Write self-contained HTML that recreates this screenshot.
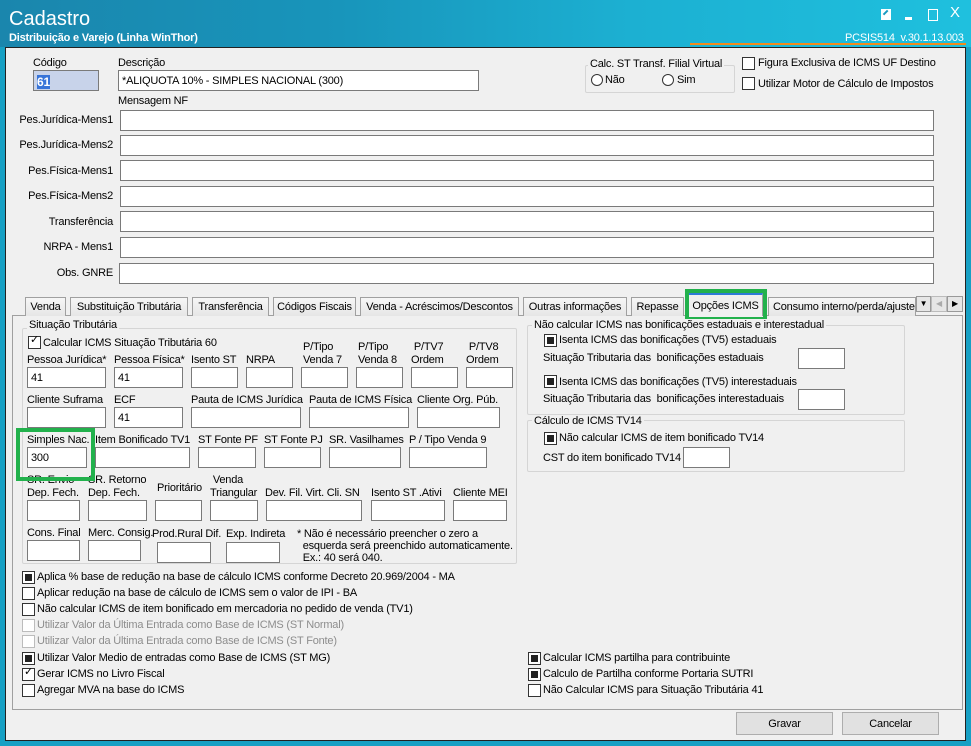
<!DOCTYPE html>
<html><head><meta charset="utf-8"><style>
*{margin:0;padding:0;box-sizing:border-box}
body{width:971px;height:746px;overflow:hidden;position:relative;font-family:"Liberation Sans",sans-serif;font-size:11px;letter-spacing:-0.2px;color:#000;background:#17a0c4}
.a{position:absolute;white-space:nowrap}
.hdr{left:0;top:0;width:971px;height:47px;background:linear-gradient(90deg,#1a86ad 0%,#1895bb 35%,#1cb0d2 65%,#1fc0de 100%)}
.in{position:absolute;background:#fff;border:1px solid #7a7a7a;height:21px;padding:4px 0 0 3px}
.cb{position:absolute;width:13px;height:13px;background:#fff;border:1px solid #333}
.cb.f::after{content:"";position:absolute;left:2px;top:2px;width:7px;height:7px;background:#222}
.cb.d{border-color:#bcbcbc}
.fs{position:absolute;border:1px solid #d5d5d5;border-radius:2px}
.tab{position:absolute;top:297px;height:19px;border:1px solid #a0a0a0;border-bottom:none;background:linear-gradient(#f6f6f6,#e6e6e6);padding:3px 0 0 0;text-align:center;white-space:nowrap;overflow:hidden}
.btn{position:absolute;border:1px solid #adadad;background:#e1e1e1;text-align:center;padding-top:5px;height:23px}
.r{text-align:right}
</style></head><body>
<div class="a hdr"></div>
<div class="a" style="left:9px;top:8px;font-size:20px;color:#fff;letter-spacing:0">Cadastro</div>
<div class="a" style="left:9px;top:32px;font-size:11px;color:#fff;font-weight:bold">Distribuição e Varejo (Linha WinThor)</div>
<div class="a" style="left:845px;top:32px;color:#fff">PCSIS514 &nbsp;v.30.1.13.003</div>
<div class="a" style="left:690px;top:43px;width:276px;height:2px;background:#f28a1c"></div>
<div class="a" style="left:881px;top:9px;width:10px;height:11px;background:#fff"></div>
<div class="a" style="left:884px;top:11px;width:6px;height:6px;border-top:2px solid #1a9ac0;transform:rotate(-45deg)"></div>
<div class="a" style="left:905px;top:17px;width:7px;height:3px;background:#fff"></div>
<div class="a" style="left:928px;top:9px;width:10px;height:12px;border:1px solid #fff"></div>
<div class="a" style="left:950px;top:4px;color:#fff;font-size:15px">X</div>
<div class="a" style="left:5px;top:47px;width:961px;height:694px;background:#f0f0f0;border:1px solid #222"></div>

<div class="a" style="left:33px;top:57px">Código</div>
<div class="in" style="left:33px;top:70px;width:66px;background:#c8d3ea"><span style="background:#3874d8;color:#fff;font-weight:bold;font-size:12px">61</span></div>
<div class="a" style="left:118px;top:57px">Descrição</div>
<div class="in" style="left:118px;top:70px;width:361px">*ALIQUOTA 10% - SIMPLES NACIONAL (300)</div>
<div class="fs" style="left:585px;top:65px;width:150px;height:28px"></div>
<div class="a" style="left:588px;top:58px;background:#f0f0f0;padding:0 2px">Calc. ST Transf. Filial Virtual</div>
<div class="a" style="left:591px;top:74px;width:12px;height:12px;border:1px solid #333;border-radius:50%;background:#fff"></div>
<div class="a" style="left:605px;top:74px">Não</div>
<div class="a" style="left:662px;top:74px;width:12px;height:12px;border:1px solid #333;border-radius:50%;background:#fff"></div>
<div class="a" style="left:677px;top:74px">Sim</div>
<div class="cb" style="left:742px;top:57px"></div><div class="a" style="left:758px;top:57px">Figura Exclusiva de ICMS UF Destino</div>
<div class="cb" style="left:742px;top:77px"></div><div class="a" style="left:758px;top:78px">Utilizar Motor de Cálculo de Impostos</div>
<div class="a" style="left:118px;top:95px">Mensagem NF</div>

<div class="a r" style="left:0;width:113px;top:114px">Pes.Jurídica-Mens1</div><div class="in" style="left:120px;top:110px;width:814px"></div>
<div class="a r" style="left:0;width:113px;top:139px">Pes.Jurídica-Mens2</div><div class="in" style="left:120px;top:135px;width:814px"></div>
<div class="a r" style="left:0;width:113px;top:165px">Pes.Física-Mens1</div><div class="in" style="left:120px;top:160px;width:814px"></div>
<div class="a r" style="left:0;width:113px;top:190px">Pes.Física-Mens2</div><div class="in" style="left:120px;top:186px;width:814px"></div>
<div class="a r" style="left:0;width:113px;top:216px">Transferência</div><div class="in" style="left:120px;top:211px;width:814px"></div>
<div class="a r" style="left:0;width:113px;top:241px">NRPA - Mens1</div><div class="in" style="left:120px;top:237px;width:814px"></div>
<div class="a r" style="left:0;width:113px;top:267px">Obs. GNRE</div><div class="in" style="left:119px;top:263px;width:815px"></div>

<div class="a" style="left:12px;top:315px;width:951px;height:395px;border:1px solid #a0a0a0;background:#f0f0f0"></div>
<div class="tab" style="left:25px;width:41px">Venda</div>
<div class="tab" style="left:70px;width:118px">Substituição Tributária</div>
<div class="tab" style="left:192px;width:77px">Transferência</div>
<div class="tab" style="left:273px;width:83px">Códigos Fiscais</div>
<div class="tab" style="left:360px;width:159px">Venda - Acréscimos/Descontos</div>
<div class="tab" style="left:523px;width:104px">Outras informações</div>
<div class="tab" style="left:631px;width:53px">Repasse</div>
<div class="tab" style="left:688px;width:75px;top:293px;height:23px;background:#f0f0f0;border-top:2px solid #2d7bd6;padding-top:5px">Opções ICMS</div>
<div class="a" style="left:685px;top:289px;width:82px;height:32px;border:4px solid #22b14c"></div>
<div class="tab" style="left:768px;width:148px;text-align:left;padding-left:4px">Consumo interno/perda/ajuste</div>
<div class="a" style="left:916px;top:296px;width:15px;height:16px;border:1px solid #999;background:#e6e6e6;font-size:8px;text-align:center;line-height:14px">▼</div>
<div class="a" style="left:931px;top:296px;width:16px;height:16px;border:1px solid #bbb;background:#e6e6e6;color:#aaa;font-size:8px;text-align:center;line-height:14px">◀</div>
<div class="a" style="left:947px;top:296px;width:16px;height:16px;border:1px solid #999;background:#e6e6e6;font-size:8px;text-align:center;line-height:14px">▶</div>

<div class="fs" style="left:22px;top:328px;width:495px;height:236px"></div>
<div class="a" style="left:27px;top:319px;background:#f0f0f0;padding:0 2px">Situação Tributária</div>
<div class="cb" style="left:28px;top:336px"></div><div class="a" style="left:30px;top:333px;font-size:11px">✓</div>
<div class="a" style="left:43px;top:337px">Calcular ICMS Situação Tributária 60</div>

<div class="a" style="left:27px;top:354px">Pessoa Jurídica*</div>
<div class="a" style="left:114px;top:354px">Pessoa Física*</div>
<div class="a" style="left:191px;top:354px">Isento ST</div>
<div class="a" style="left:246px;top:354px">NRPA</div>
<div class="a" style="left:303px;top:341px;line-height:13px">P/Tipo<br>Venda 7</div>
<div class="a" style="left:358px;top:341px;line-height:13px">P/Tipo<br>Venda 8</div>
<div class="a" style="left:411px;top:341px;line-height:13px">&nbsp;P/TV7<br>Ordem</div>
<div class="a" style="left:466px;top:341px;line-height:13px">&nbsp;P/TV8<br>Ordem</div>
<div class="in" style="left:27px;top:367px;width:79px">41</div>
<div class="in" style="left:114px;top:367px;width:69px">41</div>
<div class="in" style="left:191px;top:367px;width:47px"></div>
<div class="in" style="left:246px;top:367px;width:47px"></div>
<div class="in" style="left:301px;top:367px;width:47px"></div>
<div class="in" style="left:356px;top:367px;width:47px"></div>
<div class="in" style="left:411px;top:367px;width:47px"></div>
<div class="in" style="left:466px;top:367px;width:47px"></div>

<div class="a" style="left:27px;top:394px">Cliente Suframa</div>
<div class="a" style="left:114px;top:394px">ECF</div>
<div class="a" style="left:191px;top:394px">Pauta de ICMS Jurídica</div>
<div class="a" style="left:309px;top:394px">Pauta de ICMS Física</div>
<div class="a" style="left:417px;top:394px">Cliente Org. Púb.</div>
<div class="in" style="left:27px;top:407px;width:79px"></div>
<div class="in" style="left:114px;top:407px;width:69px">41</div>
<div class="in" style="left:191px;top:407px;width:110px"></div>
<div class="in" style="left:309px;top:407px;width:100px"></div>
<div class="in" style="left:417px;top:407px;width:83px"></div>

<div class="a" style="left:27px;top:434px">Simples Nac.</div>
<div class="a" style="left:95px;top:434px">Item Bonificado TV1</div>
<div class="a" style="left:198px;top:434px">ST Fonte PF</div>
<div class="a" style="left:264px;top:434px">ST Fonte PJ</div>
<div class="a" style="left:329px;top:434px">SR. Vasilhames</div>
<div class="a" style="left:409px;top:434px">P / Tipo Venda 9</div>
<div class="in" style="left:27px;top:447px;width:60px">300</div>
<div class="in" style="left:95px;top:447px;width:95px"></div>
<div class="in" style="left:198px;top:447px;width:58px"></div>
<div class="in" style="left:264px;top:447px;width:57px"></div>
<div class="in" style="left:329px;top:447px;width:72px"></div>
<div class="in" style="left:409px;top:447px;width:78px"></div>

<div class="a" style="left:27px;top:474px;line-height:13px">SR. Envio<br>Dep. Fech.</div>
<div class="a" style="left:88px;top:474px;line-height:13px">SR. Retorno<br>Dep. Fech.</div>
<div class="a" style="left:157px;top:482px">Prioritário</div>
<div class="a" style="left:210px;top:474px;line-height:13px">&nbsp;Venda<br>Triangular</div>
<div class="a" style="left:265px;top:487px">Dev. Fil. Virt. Cli. SN</div>
<div class="a" style="left:371px;top:487px">Isento ST .Ativi</div>
<div class="a" style="left:453px;top:487px">Cliente MEI</div>
<div class="a" style="left:16px;top:428px;width:79px;height:53px;border:4px solid #22b14c"></div>
<div class="in" style="left:27px;top:500px;width:53px"></div>
<div class="in" style="left:88px;top:500px;width:59px"></div>
<div class="in" style="left:155px;top:500px;width:47px"></div>
<div class="in" style="left:210px;top:500px;width:48px"></div>
<div class="in" style="left:266px;top:500px;width:96px"></div>
<div class="in" style="left:371px;top:500px;width:74px"></div>
<div class="in" style="left:453px;top:500px;width:54px"></div>

<div class="a" style="left:27px;top:527px">Cons. Final</div>
<div class="a" style="left:88px;top:527px">Merc. Consig.</div>
<div class="a" style="left:152px;top:528px">Prod.Rural Dif.</div>
<div class="a" style="left:226px;top:528px">Exp. Indireta</div>
<div class="a" style="left:297px;top:528px;line-height:12px">* Não é necessário preencher o zero a<br>&nbsp;&nbsp;esquerda será preenchido automaticamente.<br>&nbsp;&nbsp;Ex.: 40 será 040.</div>
<div class="in" style="left:27px;top:540px;width:53px"></div>
<div class="in" style="left:88px;top:540px;width:53px"></div>
<div class="in" style="left:157px;top:542px;width:54px"></div>
<div class="in" style="left:226px;top:542px;width:54px"></div>

<div class="fs" style="left:527px;top:325px;width:378px;height:90px"></div>
<div class="a" style="left:532px;top:319px;background:#f0f0f0;padding:0 2px">Não calcular ICMS nas bonificações estaduais e interestadual</div>
<div class="cb f" style="left:544px;top:334px"></div><div class="a" style="left:559px;top:334px">Isenta ICMS das bonificações (TV5) estaduais</div>
<div class="a" style="left:543px;top:352px">Situação Tributaria das &nbsp;bonificações estaduais</div>
<div class="in" style="left:798px;top:348px;width:47px"></div>
<div class="cb f" style="left:544px;top:375px"></div><div class="a" style="left:559px;top:376px">Isenta ICMS das bonificações (TV5) interestaduais</div>
<div class="a" style="left:543px;top:393px">Situação Tributaria das &nbsp;bonificações interestaduais</div>
<div class="in" style="left:798px;top:389px;width:47px"></div>
<div class="fs" style="left:527px;top:420px;width:378px;height:52px"></div>
<div class="a" style="left:532px;top:415px;background:#f0f0f0;padding:0 2px">Cálculo de ICMS TV14</div>
<div class="cb f" style="left:544px;top:432px"></div><div class="a" style="left:559px;top:432px">Não calcular ICMS de item bonificado TV14</div>
<div class="a" style="left:543px;top:452px">CST do item bonificado TV14</div>
<div class="in" style="left:683px;top:447px;width:47px"></div>

<div class="cb f" style="left:22px;top:571px"></div><div class="a" style="left:37px;top:571px">Aplica % base de redução na base de cálculo ICMS conforme Decreto 20.969/2004 - MA</div>
<div class="cb" style="left:22px;top:587px"></div><div class="a" style="left:37px;top:587px">Aplicar redução na base de cálculo de ICMS sem o valor de IPI - BA</div>
<div class="cb" style="left:22px;top:603px"></div><div class="a" style="left:37px;top:603px">Não calcular ICMS de item bonificado em mercadoria no pedido de venda (TV1)</div>
<div class="cb d" style="left:22px;top:619px"></div><div class="a" style="left:37px;top:619px;color:#8d8d8d">Utilizar Valor da Última Entrada como Base de ICMS (ST Normal)</div>
<div class="cb d" style="left:22px;top:635px"></div><div class="a" style="left:37px;top:635px;color:#8d8d8d">Utilizar Valor da Última Entrada como Base de ICMS (ST Fonte)</div>
<div class="cb f" style="left:22px;top:652px"></div><div class="a" style="left:37px;top:652px">Utilizar Valor Medio de entradas como Base de ICMS (ST MG)</div>
<div class="cb" style="left:22px;top:668px"></div><div class="a" style="left:24px;top:665px">✓</div><div class="a" style="left:37px;top:668px">Gerar ICMS no Livro Fiscal</div>
<div class="cb" style="left:22px;top:684px"></div><div class="a" style="left:37px;top:684px">Agregar MVA na base do ICMS</div>
<div class="cb f" style="left:528px;top:652px"></div><div class="a" style="left:543px;top:652px">Calcular ICMS partilha para contribuinte</div>
<div class="cb f" style="left:528px;top:668px"></div><div class="a" style="left:543px;top:668px">Calculo de Partilha conforme Portaria SUTRI</div>
<div class="cb" style="left:528px;top:684px"></div><div class="a" style="left:543px;top:684px">Não Calcular ICMS para Situação Tributária 41</div>

<div class="btn" style="left:736px;top:712px;width:97px">Gravar</div>
<div class="btn" style="left:842px;top:712px;width:97px">Cancelar</div>
</body></html>
